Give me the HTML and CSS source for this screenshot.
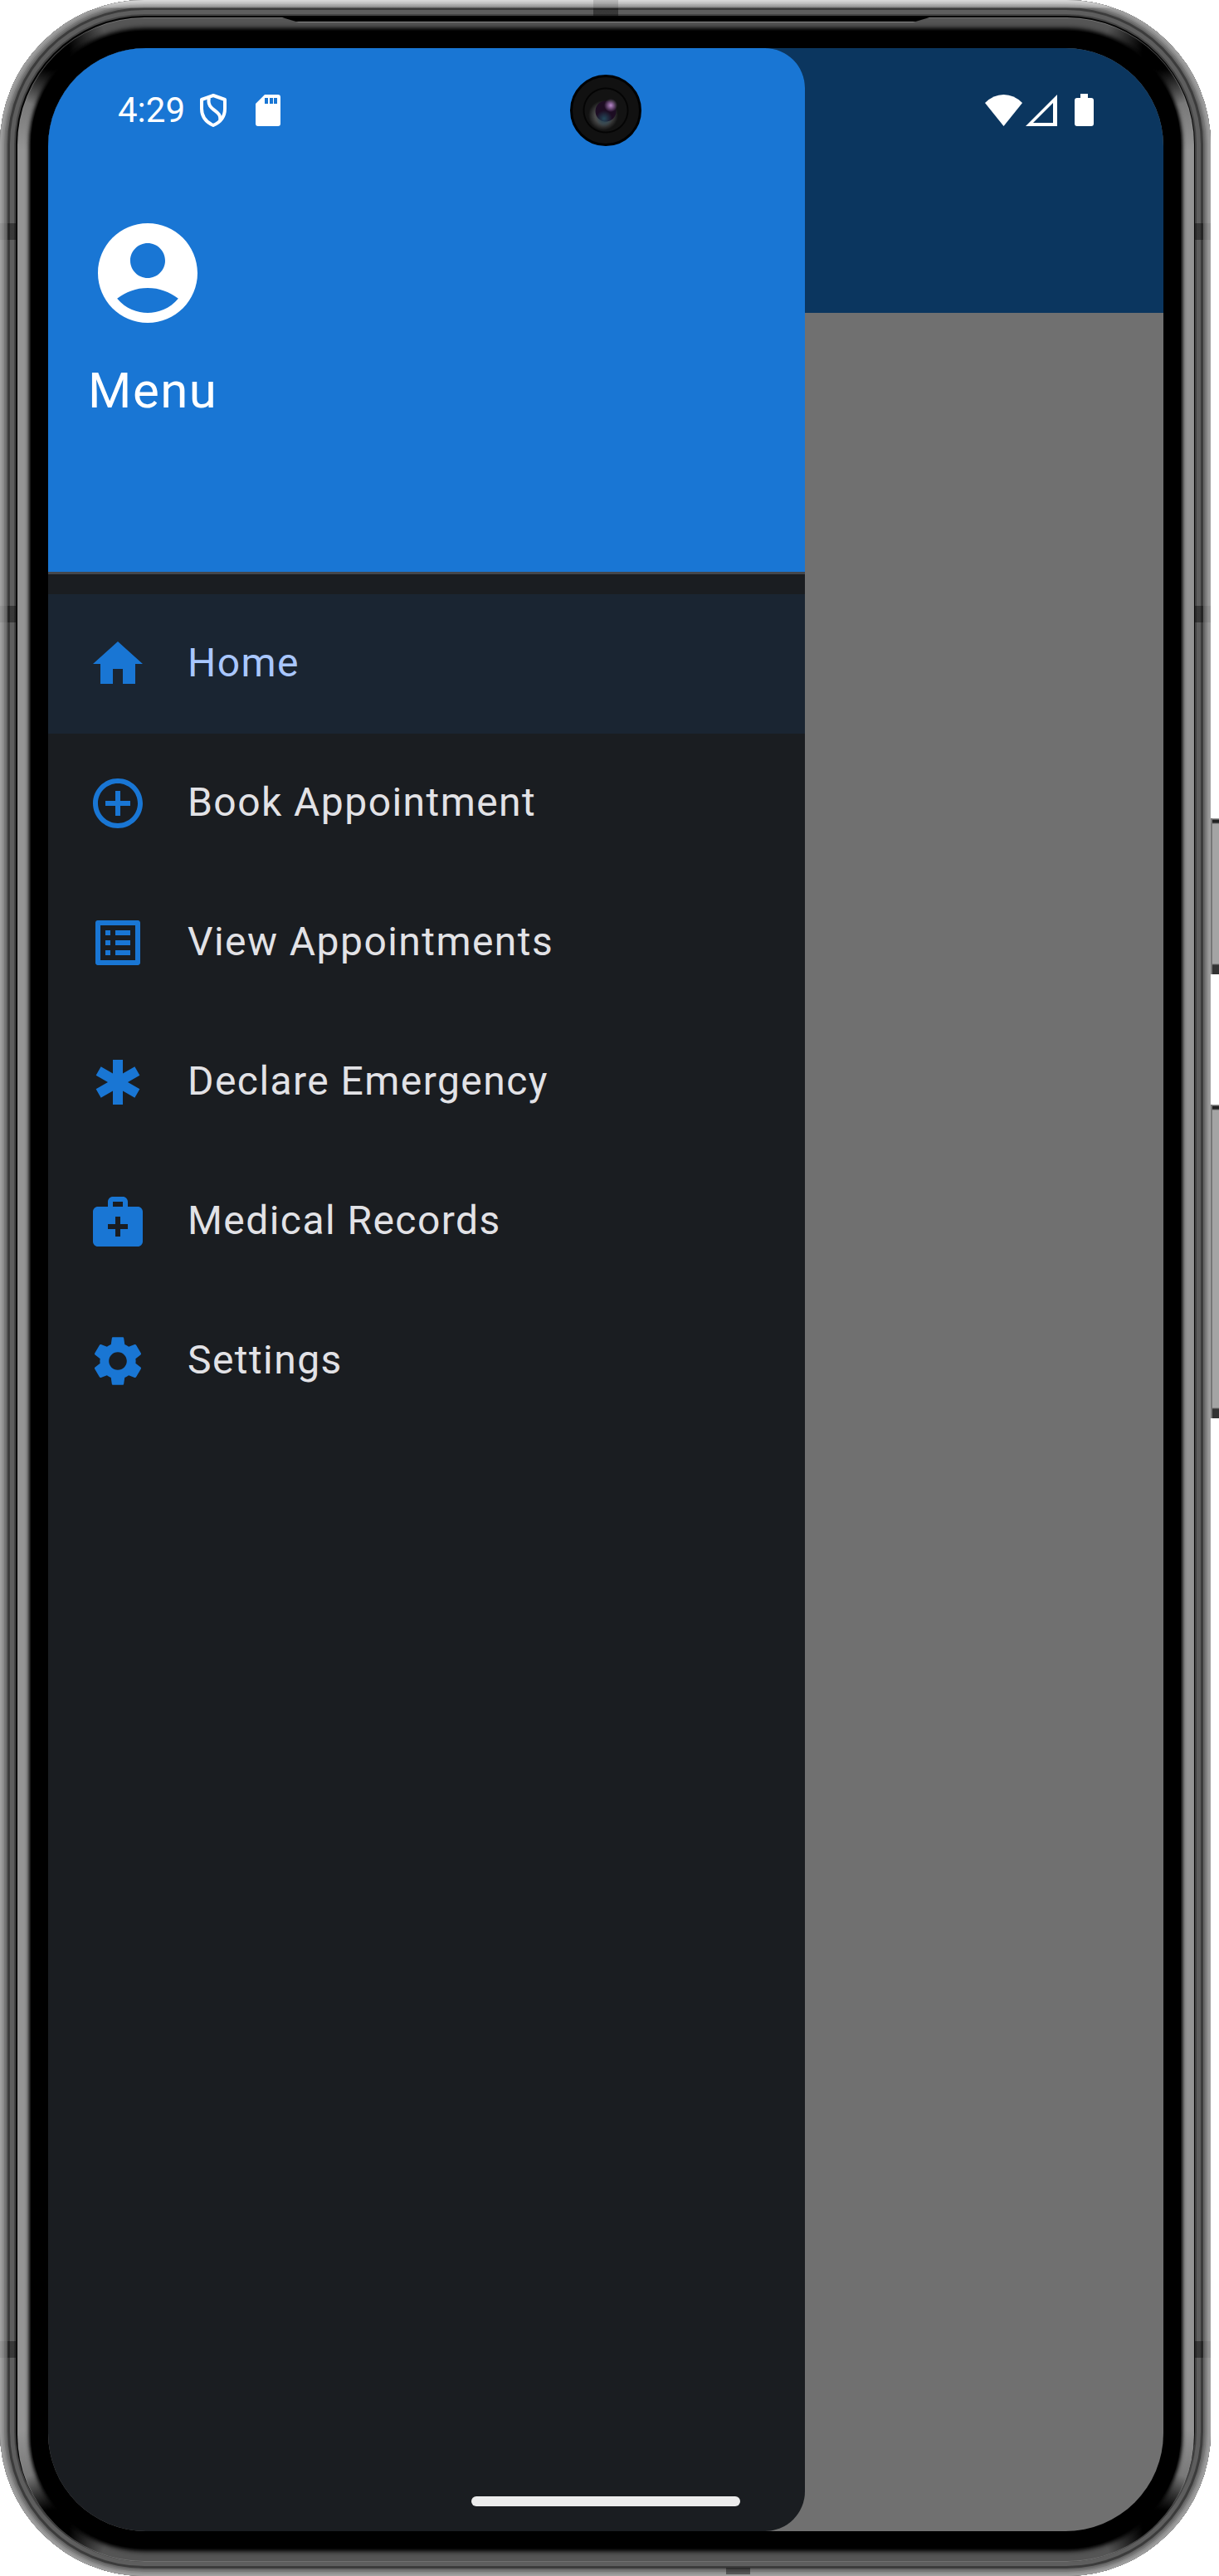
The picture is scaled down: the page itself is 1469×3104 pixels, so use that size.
FILE: index.html
```html
<!DOCTYPE html>
<html lang="en">
<head>
<meta charset="utf-8">
<meta name="viewport" content="width=device-width, initial-scale=1">
<title>Menu</title>
<link rel="stylesheet" href="styles.css">
</head>
<body>
<div class="phone">
  <span class="side-button power"></span>
  <span class="side-button volume"></span>
  <span class="band left upper"></span>
  <span class="band left middle"></span>
  <span class="band left lower"></span>
  <span class="band right upper"></span>
  <span class="band right middle"></span>
  <span class="band right lower"></span>
  <span class="band top"></span>
  <span class="band bottom"></span>
  <div class="glass">
    <span class="speaker"></span>
    <div class="bezel">
      <div class="screen">
        <div class="app-bar"></div>
        <div class="drawer">
          <header class="drawer-header">
            <svg class="avatar" viewBox="0 0 24 24" aria-hidden="true"><path d="M12 2C6.48 2 2 6.48 2 12s4.48 10 10 10 10-4.48 10-10S17.52 2 12 2zm0 4c1.93 0 3.5 1.57 3.5 3.5S13.93 13 12 13s-3.5-1.57-3.5-3.5S10.07 6 12 6zm0 14c-2.03 0-4.43-.82-6.14-2.88C7.55 15.8 9.68 15 12 15s4.45.8 6.14 2.12C16.43 19.18 14.03 20 12 20z"/></svg>
            <h1 class="title">Menu</h1>
          </header>
          <nav class="menu">
            <a class="item selected" href="#home" aria-current="page">
              <svg class="icon" viewBox="0 0 24 24" aria-hidden="true"><path d="M10 20v-6h4v6h5v-8h3L12 3 2 12h3v8z"/></svg>
              <span class="label">Home</span>
            </a>
            <a class="item" href="#book">
              <svg class="icon" viewBox="0 0 24 24" aria-hidden="true"><path d="M13 7h-2v4H7v2h4v4h2v-4h4v-2h-4V7zm-1-5C6.48 2 2 6.48 2 12s4.48 10 10 10 10-4.48 10-10S17.52 2 12 2zm0 18c-4.41 0-8-3.59-8-8s3.59-8 8-8 8 3.59 8 8-3.59 8-8 8z"/></svg>
              <span class="label">Book Appointment</span>
            </a>
            <a class="item" href="#appointments">
              <svg class="icon" viewBox="0 0 24 24" aria-hidden="true"><path d="M19 5v14H5V5h14m1.100-2H3.900c-.5 0-.9.4-.9.9v16.200c0 .4.4.9.9.9h16.200c.4 0 .9-.5.9-.9V3.900c0-.5-.5-.9-.9-.9zM11 7h6v2h-6V7zm0 4h6v2h-6v-2zm0 4h6v2h-6zM7 7h2v2H7zm0 4h2v2H7zm0 4h2v2H7z"/></svg>
              <span class="label">View Appointments</span>
            </a>
            <a class="item" href="#emergency">
              <svg class="icon" viewBox="0 0 24 24" aria-hidden="true"><path d="M20.790 9.230l-2-3.460L14 8.540V3h-4v5.540L5.210 5.770l-2 3.460L8 12l-4.790 2.770 2 3.460L10 15.460V21h4v-5.540l4.790 2.770 2-3.460L16 12z"/></svg>
              <span class="label">Declare Emergency</span>
            </a>
            <a class="item" href="#records">
              <svg class="icon" viewBox="0 0 24 24" aria-hidden="true"><path d="M20 6h-4V4c0-1.100-.9-2-2-2h-4c-1.100 0-2 .9-2 2v2H4c-1.100 0-2 .9-2 2v12c0 1.100.9 2 2 2h16c1.100 0 2-.9 2-2V8c0-1.100-.9-2-2-2zM10 4h4v2h-4V4zm6 11h-3v3h-2v-3H8v-2h3v-3h2v3h3v2z"/></svg>
              <span class="label">Medical Records</span>
            </a>
            <a class="item" href="#settings">
              <svg class="icon" viewBox="0 0 24 24" aria-hidden="true"><path d="M19.140 12.940c.04-.3.06-.61.06-.94 0-.32-.02-.64-.07-.94l2.030-1.580c.18-.14.23-.41.12-.61l-1.920-3.320c-.12-.22-.37-.29-.59-.22l-2.390.96c-.5-.38-1.030-.7-1.620-.94l-.36-2.540c-.04-.24-.24-.41-.48-.41h-3.840c-.24 0-.43.17-.47.41l-.36 2.540c-.59.24-1.130.57-1.620.94l-2.390-.96c-.22-.08-.47 0-.59.22L2.740 8.870c-.12.21-.08.47.12.61l2.030 1.580c-.05.3-.09.63-.09.94s.02.64.07.94l-2.030 1.580c-.18.14-.23.41-.12.61l1.920 3.320c.12.22.37.29.59.22l2.390-.96c.5.38 1.030.7 1.620.94l.36 2.540c.05.24.24.41.48.41h3.840c.24 0 .44-.17.47-.41l.36-2.540c.59-.24 1.130-.56 1.620-.94l2.390.96c.22.08.47 0 .59-.22l1.920-3.320c.12-.22.07-.47-.12-.61l-2.010-1.580zM12 15.600c-1.980 0-3.600-1.620-3.600-3.600s1.620-3.600 3.600-3.600 3.600 1.620 3.600 3.600-1.620 3.600-3.600 3.600z"/></svg>
              <span class="label">Settings</span>
            </a>
          </nav>
        </div>
        <div class="status-bar">
          <span class="time">4:29</span>
          <svg class="shield" width="34" height="42" viewBox="0 0 34 42" fill="none" stroke="#fff" stroke-width="4" stroke-linejoin="round" aria-hidden="true"><path d="M17 3 31 8v11c0 9-5 16-14 20C8 35 3 28 3 19V8z"/><path d="M12 6c-4 16 16 14 13 27"/></svg>
          <svg width="30" height="38" viewBox="0 0 30 38" fill="#fff" fill-rule="evenodd" aria-hidden="true"><path d="M11 0h16a3 3 0 0 1 3 3v32a3 3 0 0 1-3 3H3a3 3 0 0 1-3-3V11zM11 4v7h4V4zm6 0v7h4V4zm5 0v7h4V4z"/></svg>
          <span class="signals">
            <svg width="45" height="38" viewBox="0 0 45 38" fill="#fff" aria-hidden="true"><path d="M0 10Q10 0 22.500 0T45 10L22.500 38z"/></svg>
            <svg class="cell" width="38" height="38" viewBox="0 0 38 38" fill="#fff" fill-rule="evenodd" aria-hidden="true"><path d="M38 0v38H0zM33 10 9 34h24z"/></svg>
            <svg width="23" height="40" viewBox="0 0 23 40" fill="#fff" aria-hidden="true"><path d="M7 0h9v5h4a3 3 0 0 1 3 3v28a3 3 0 0 1-3 3H3a3 3 0 0 1-3-3V8a3 3 0 0 1 3-3h4z"/></svg>
          </span>
        </div>
        <span class="camera"></span>
        <span class="home-bar"></span>
      </div>
    </div>
  </div>
</div>
</body>
</html>
```

FILE: styles.css
```css
* {
  box-sizing: border-box;
}

body {
  margin: 0;
  background: #fff;
  font-family: Roboto, "Noto Sans", sans-serif;
}

/* Metal frame: concentric rings from the outer edge inwards */
.phone {
  position: relative;
  display: flex;
  min-height: 100vh;
  margin-right: 10px;
  padding: 21px 20px 17px 21px;
  border-radius: 174px;
  background: #050505;
  box-shadow:
    inset 0 0 0 1px #a2a2a2,
    inset 0 0 0 3px #9a9a9a,
    inset 0 0 0 5px #8c8c8c,
    inset 0 0 0 7px #787878,
    inset 0 0 0 9px #666,
    inset 0 0 0 12px #3c3c3c,
    inset 0 0 0 17px #5e5e5e,
    inset 0 0 0 19px #444;
}

/* Light falling on the top edge */
.phone::before {
  content: "";
  position: absolute;
  inset: 0;
  border-radius: 174px;
  background: linear-gradient(#fff9 0, #fff4 9px, #fff0 10px);
}

.glass {
  position: relative;
  flex: 1;
  display: flex;
  padding: 16px;
  border-radius: 153px;
  background:
    radial-gradient(circle at 38px 38px, #000 24px, #0000 70px),
    radial-gradient(circle at calc(100% - 38px) 38px, #000 24px, #0000 70px),
    radial-gradient(circle at 38px calc(100% - 38px), #000 24px, #0000 70px),
    radial-gradient(circle at calc(100% - 38px) calc(100% - 38px), #000 24px, #0000 70px),
    linear-gradient(#555 30px, #949494 160px, #949494 calc(100% - 160px), #555 calc(100% - 30px));
  box-shadow: inset 0 0 0 1px #8888;
}

.bezel {
  flex: 1;
  display: flex;
  padding: 21px;
  border-radius: 137px;
  background: #000;
  box-shadow: 0 0 4px #000, 0 -3px 6px #000, 0 3px 6px #000;
}

.speaker {
  position: absolute;
  top: 0;
  left: 50%;
  width: 780px;
  height: 6px;
  margin-left: -390px;
  background: linear-gradient(#000 5px, #888 5px);
  clip-path: polygon(0 0, 100% 0, 760px 100%, 20px 100%);
}

/* Antenna bands */
.band {
  position: absolute;
  background: #0006;
}

.left,
.right {
  width: 19px;
  height: 20px;
}

.left {
  left: 0;
  background: linear-gradient(to right, #0001 9px, #0006 9px);
}

.right {
  right: 0;
  background: linear-gradient(to left, #0001 9px, #0006 9px);
}

.upper {
  top: 269px;
}

.middle {
  top: 730px;
}

.lower {
  bottom: 263px;
}

.band.top {
  top: 0;
  left: 49%;
  width: 30px;
  height: 19px;
  background: linear-gradient(#0002 10px, #0006 10px);
}

.band.bottom {
  bottom: 2px;
  left: 60%;
  width: 29px;
  height: 8px;
}

.side-button {
  position: absolute;
  left: 100%;
  width: 10px;
  border-left: 2px solid #777;
  background: linear-gradient(#999 1px, #222 2px, #222 5px, #a4a4a4 7px, #a4a4a4 calc(100% - 13px), #333 calc(100% - 11px));
}

.power {
  top: 986px;
  height: 188px;
}

.volume {
  top: 1331px;
  height: 378px;
}

.screen {
  position: relative;
  flex: 1;
  display: flex;
  flex-direction: column;
  border-radius: 118px;
  background: #707070;
  overflow: hidden;
}

.app-bar {
  height: 319px;
  background: #0b365f;
}

.drawer {
  position: absolute;
  top: 0;
  bottom: 0;
  left: 0;
  width: 912px;
  max-width: 100%;
  border-radius: 0 48px 48px 0;
  background: #1a1d21;
  overflow: hidden;
}

.drawer-header {
  height: 634px;
  padding: 199px 48px 0;
  border-bottom: 3px solid #44474c;
  background: #1976d4;
  color: #fff;
}

.avatar {
  display: block;
  width: 144px;
  height: 144px;
  fill: currentColor;
}

.title {
  margin: 30px 0 0;
  font-size: 60px;
  font-weight: 400;
  line-height: 80px;
  letter-spacing: 0.025em;
}

.menu {
  padding-top: 24px;
}

.item {
  display: flex;
  align-items: center;
  gap: 48px;
  height: 168px;
  padding: 0 48px;
  color: #e2e2e6;
  font-size: 48px;
  line-height: 56px;
  letter-spacing: 0.03em;
  text-decoration: none;
}

.item.selected {
  background: #1a2532;
  color: #a9c7ff;
}

.label {
  padding-bottom: 2px;
}

.icon {
  width: 72px;
  height: 72px;
  fill: #1976d4;
}

.status-bar {
  position: absolute;
  top: 51px;
  left: 0;
  right: 0;
  display: flex;
  align-items: center;
  height: 48px;
  padding: 0 84px;
  color: #fff;
  font-size: 42px;
  line-height: 48px;
}

.shield {
  margin: 0 34px 0 17px;
}

.signals {
  display: flex;
  align-items: center;
  margin-left: auto;
}

.cell {
  margin: 0 21px 0 4px;
}

.camera {
  position: absolute;
  top: 32px;
  left: 50%;
  width: 86px;
  height: 86px;
  margin-left: -43px;
  border: 3px solid #000;
  border-radius: 50%;
  background:
    radial-gradient(ellipse at 46px 34px, #b98acb 0, #8a5fa200 8px),
    radial-gradient(circle at 38px 50px, #24485a 0, #24485a00 10px),
    radial-gradient(circle at 40px 41px, #1c0c22 12px, #0000 13px),
    radial-gradient(circle at 37px 46px, #4a4a4a 10px, #0000 18px),
    radial-gradient(circle at 40px 40px, #131313 25px, #040404 26px, #040404 27px, #111 28px);
}

.home-bar {
  position: absolute;
  bottom: 30px;
  left: 50%;
  width: 324px;
  height: 12px;
  margin-left: -162px;
  border-radius: 6px;
  background: #ececec;
}
```
